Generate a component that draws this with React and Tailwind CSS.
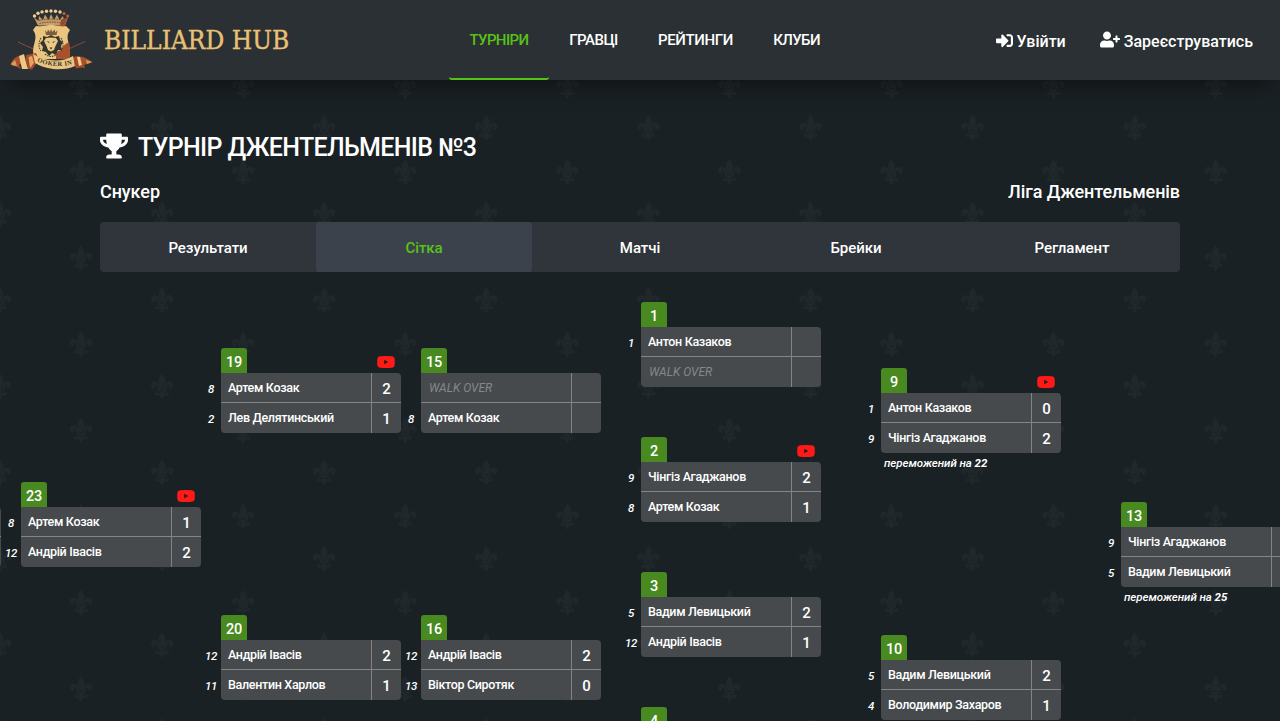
import { FaSignInAlt, FaUserPlus, FaTrophy } from 'react-icons/fa';

const NAV = [
  { label: 'ТУРНІРИ', active: true, cls: 'w-[100px] tracking-[-0.6px]' },
  { label: 'ГРАВЦІ', cls: 'w-[89px] tracking-[-0.5px]' },
  { label: 'РЕЙТИНГИ', cls: 'w-[115px] tracking-[-0.4px]' },
  { label: 'КЛУБИ', cls: 'w-[87px] tracking-[-0.6px]' },
];

const TABS = ['Результати', 'Сітка', 'Матчі', 'Брейки', 'Регламент'];

const MATCHES = [
  { x: -179, y: 210, rows: [['', '', ''], ['', '', '']] },
  { n: 23, x: 21, y: 210, video: true, rows: [['8', 'Артем Козак', '1'], ['12', 'Андрій Івасів', '2']] },
  { n: 19, x: 221, y: 76, video: true, rows: [['8', 'Артем Козак', '2'], ['2', 'Лев Делятинський', '1']] },
  { n: 20, x: 221, y: 343, rows: [['12', 'Андрій Івасів', '2'], ['11', 'Валентин Харлов', '1']] },
  { n: 15, x: 421, y: 76, rows: [['', null, ''], ['8', 'Артем Козак', '']] },
  { n: 16, x: 421, y: 343, rows: [['12', 'Андрій Івасів', '2'], ['13', 'Віктор Сиротяк', '0']] },
  { n: 1, x: 641, y: 30, rows: [['1', 'Антон Казаков', ''], ['', null, '']] },
  { n: 2, x: 641, y: 165, video: true, rows: [['9', 'Чінгіз Агаджанов', '2'], ['8', 'Артем Козак', '1']] },
  { n: 3, x: 641, y: 300, rows: [['5', 'Вадим Левицький', '2'], ['12', 'Андрій Івасів', '1']] },
  { n: 4, x: 641, y: 435, rows: [['', '', ''], ['', '', '']] },
  { n: 9, x: 881, y: 96, video: true, loser: 22, rows: [['1', 'Антон Казаков', '0'], ['9', 'Чінгіз Агаджанов', '2']] },
  { n: 10, x: 881, y: 363, rows: [['5', 'Вадим Левицький', '2'], ['4', 'Володимир Захаров', '1']] },
  { n: 13, x: 1121, y: 230, loser: 25, rows: [['9', 'Чінгіз Агаджанов', ''], ['5', 'Вадим Левицький', '']] },
];

function Lily() {
  return (
    <g>
      <path d="M0-13C1.5-10 3.6-8 3.4-5C3.3-2.500 1.800-.5 1.500 2H-1.500C-1.800-.5-3.300-2.500-3.400-5C-3.600-8-1.500-10 0-13Z" />
      <path d="M2 3C2.500-1 4-5 7.500-5C10-5 11.500-2.500 10.800-.2C10.200 2 7.500 2.600 6.300 1C7.800 1 8.200-.4 7.200-1.200C5.500-2 4.500 0 4.200 3Z" />
      <path d="M-2 3C-2.500-1-4-5-7.500-5C-10-5-11.500-2.500-10.800-.2C-10.200 2-7.500 2.600-6.300 1C-7.800 1-8.200-.4-7.200-1.200C-5.500-2-4.500 0-4.200 3Z" />
      <path d="M-4.500 3H4.500V4.800H-4.500Z" />
      <path d="M-1.600 5H1.600C1.600 7 2.500 7.500 4.500 6C7 5 7.500 8 5.500 9C4 9.500 3 8.500 2.200 8.600C2 10.500 1 11.500 0 13C-1 11.500-2 10.500-2.200 8.600C-3 8.500-4 9.500-5.500 9C-7.500 8-7 5-4.500 6C-2.500 7.500-1.600 7-1.600 5Z" />
    </g>
  );
}

function Backdrop() {
  return (
    <svg className="absolute inset-0 h-full w-full" fill="#21282b">
      <defs>
        <pattern id="lilies" width="162.1" height="86.15" x="0" y="85" patternUnits="userSpaceOnUse">
          <g transform="translate(81 .8)"><Lily /></g>
          <g transform="translate(81 86.9)"><Lily /></g>
          <g transform="translate(0 43)"><Lily /></g>
          <g transform="translate(162.1 43)"><Lily /></g>
        </pattern>
      </defs>
      <rect width="100%" height="100%" fill="url(#lilies)" />
    </svg>
  );
}

function Crest() {
  return (
    <svg className="h-[62px] w-[84px] shrink-0" viewBox="10 9 84 62">
      <path d="M18 42L42 53M85 41.500L60 53" stroke="#8d4a3c" strokeWidth="1" />
      <path d="M34 17.500L38.500 21L39 16L43 20L45 14.500L48.500 20L51 14L54 20L57 14.500L59.500 20L63 16L64 21L68 17.500L65 25.500H38Z" fill="#c79b67" />
      <path d="M61 20L68 17L65 25.500H60Z" fill="#a44a2b" />
      <path d="M39 20.500Q51.500 17.500 64 20.500M39.500 23.500Q51.500 20.500 63.500 23.500" stroke="#4b463b" strokeWidth=".9" strokeDasharray="1.500 1" fill="none" />
      <g fill="#f2cf91">
        <circle cx="34.500" cy="16" r="1.700" /><circle cx="38" cy="13.300" r="1.700" /><circle cx="42" cy="11.900" r="1.700" />
        <circle cx="46.500" cy="11.200" r="1.700" /><circle cx="51" cy="11" r="1.700" /><circle cx="55.500" cy="11.200" r="1.700" />
        <circle cx="60" cy="12" r="1.700" />
      </g>
      <g fill="#b5603a"><circle cx="64" cy="13.500" r="1.600" /><circle cx="67.700" cy="16" r="1.600" /></g>
      <path d="M36 26Q43 27 51 24.500Q59 27 66 26L70 30Q66 35 68.500 43Q70.500 50 69 59H34Q32 50 34.500 43Q37 35 33 30Z" fill="#e9c57f" />
      <path d="M69 42Q71 51 69 59H56Q55 51 61 50Q64 44 69 42Z" fill="#a9502d" />
      <path d="M45 30L47 32.500L48 29.500L50 32L51 29L52.500 32L54.500 29.500L55.500 32.500L57.500 30L56.500 35H46Z" fill="#7a5d3d" />
      <path d="M51 35L55 37L59 36L60 40L63 42L61 46L62 50L58 50L56 55L52 53L49 56L46 52L42 51L43 47L40 43L43 40L43 36L47 37Z" fill="#34352f" />
      <path d="M51 37.500L56 38L58 41L55.500 46L54 50L51 51.500L48 50L46.500 46L44 41L46 38Z" fill="#ecc983" />
      <path d="M46.500 41L49.500 42L49 43ZM55.500 41L52.500 42L53 43ZM49.500 47.500H52.500L51 49.500Z" fill="#2d2e2b" />
      <path d="M41 38Q37 45 41 51M61 38Q65 45 61 51M45 54Q51 59 57 54" fill="none" stroke="#4b463b" strokeWidth="1.200" strokeDasharray="1.500 1" />
      <path d="M10.500 65Q12 58 20 55.500L22 63L19 65L21 69Q14 65 10.500 65ZM92.500 62Q88 59 83 57L77 56L78 67L85 68L84 65L92 62.500Z" fill="#a9502d" />
      <path d="M11 64L15 60L17 66L13 65.500ZM86 60L92 62L87 64Z" fill="#d79d60" />
      <path d="M19 56L24 54L26 62L29 69L22 69Z" fill="#ecc983" />
      <path d="M26 55L36 53L39 60L32 69.500L28 69Q25 62 26 55ZM72 57L79 56L83 67L76 68.500Z" fill="#a44a2b" />
      <path d="M28.500 57L32 56L34 63L30 68Z" fill="#e2a566" />
      <path d="M77 57L80 57L82 65L79 66Z" fill="#efcc89" />
      <path d="M33 54Q43 60.500 56 60.500Q65 60.500 73 56L75 66Q66 70 53 69Q42 67.500 35 63Z" fill="#e9c57f" />
      <path id="ribbon" d="M37 61.500Q54 69 74 64" fill="none" />
      <text fontFamily="Liberation Serif, serif" fontWeight="700" fontSize="6.500" fill="#3c3529" textLength="36">
        <textPath href="#ribbon">OOKER IN</textPath>
      </text>
    </svg>
  );
}

function VideoBadge() {
  return (
    <svg className="absolute left-[156px] top-2 h-3 w-[18px]" viewBox="0 0 18 12">
      <path fillRule="evenodd" fill="#ff1a17" d="M3 0.200Q9-.2 15 .2Q17.300 .4 17.600 2.500Q18 6 17.600 9.500Q17.300 11.600 15 11.800Q9 12.200 3 11.800Q.7 11.600 .4 9.500Q0 6 .4 2.500Q.7 .4 3 .2ZM7.200 3.700V8.300L11.200 6Z" />
    </svg>
  );
}

function Match({ m }) {
  return (
    <div className="absolute w-[180px]" style={{ left: m.x, top: m.y }}>
      <div className="flex h-[25px] w-[26px] items-center justify-center rounded-t-[3px] bg-[#488a20] pt-[4px] text-[14.5px] font-medium leading-5 tracking-[-0.2px]">
        {m.n}
      </div>
      {m.video && <VideoBadge />}
      <div className="h-[60px] rounded-r-[4px] rounded-bl-[4px] bg-[#464a4d]">
        {m.rows.map(([seed, name, score], i) => (
          <div key={i} className={i === 0 ? 'relative flex h-[30px] border-b border-[#838485]' : 'relative flex h-[30px]'}>
            <span className="absolute -left-[20px] top-[8px] w-5 text-center text-[11.5px] font-medium italic leading-4 tracking-[-0.3px]">{seed}</span>
            <div className={name === null
              ? 'w-[150px] pl-2 pt-px text-[12px] italic leading-[29px] text-[#85878a]'
              : 'w-[150px] pl-[7px] text-[12.5px] font-medium leading-[29px] tracking-[-0.32px]'}>
              {name === null ? 'WALK OVER' : name}
            </div>
            <div className="w-[30px] border-l border-[#838485] pt-px text-center text-[15px] font-medium leading-[30px]">{score}</div>
          </div>
        ))}
      </div>
      {m.loser && (
        <div className="pl-[3px] pt-[2px] text-[11.5px] font-medium italic leading-4 tracking-[-0.05px]">
          переможений на <b>{m.loser}</b>
        </div>
      )}
    </div>
  );
}

export default function App() {
  return (
    <div className="relative flex h-[721px] w-full flex-col overflow-hidden bg-[#1a2124] font-['Roboto',sans-serif] text-white">
      <Backdrop />
      <header className="relative flex h-20 shrink-0 bg-[#2a3033] shadow-[0_12px_24px_-8px_rgba(0,0,0,0.5)]">
        <div className="flex w-[449px] items-center pl-[10px]">
          <Crest />
          <span className="ml-[10px] whitespace-nowrap font-['DejaVu_Serif_Condensed','DejaVu_Serif',serif] text-[26px] tracking-[0.03px] text-[#e8c274] [-webkit-text-stroke:0.4px_#e8c274]">BILLIARD HUB</span>
        </div>
        <nav className="flex text-[15px] font-medium">
          {NAV.map((item) => (
            <a key={item.label} className={`flex items-center justify-center ${item.cls} ${item.active ? 'rounded-[3px] border-b-2 border-[#58c218] pt-[2px] text-[#58c218]' : ''}`}>
              {item.label}
            </a>
          ))}
        </nav>
        <div className="ml-auto flex items-center pr-[27px] pt-[3px] text-[16px] font-medium">
          <a className="mr-[34px] flex items-center gap-1">
            <FaSignInAlt className="mb-[3px] size-[17px]" />
            <span>Увійти</span>
          </a>
          <a className="flex items-center gap-[4px]">
            <FaUserPlus className="mb-[4px] h-[17px] w-5" />
            <span>Зареєструватись</span>
          </a>
        </div>
      </header>

      <main className="relative mx-[100px] flex shrink-0 flex-col">
        <h1 className="mt-[49px] flex h-9 items-center text-[25px] font-medium tracking-[-0.65px]">
          <FaTrophy className="mb-[3px] mr-[10px] h-[26px] w-7" />
          <span className="mt-px">ТУРНІР ДЖЕНТЕЛЬМЕНІВ №3</span>
        </h1>
        <div className="mt-[12px] flex h-7 items-center justify-between text-[18px] font-medium tracking-[-0.08px]">
          <span>Снукер</span>
          <span>Ліга Джентельменів</span>
        </div>
        <div className="mt-[17px] flex h-[50px] overflow-hidden rounded bg-[#2f353b] text-[15px] font-medium tracking-[-0.05px]">
          {TABS.map((tab, i) => (
            <div key={tab} className={i === 1
              ? 'flex flex-1 items-center justify-center rounded-[3px] bg-[#3c424c] pt-[2px] text-[#58c218]'
              : 'flex flex-1 items-center justify-center pt-[2px]'}>
              {tab}
            </div>
          ))}
        </div>
      </main>

      <section className="relative flex-1">
        {MATCHES.map((m) => <Match key={`${m.x}:${m.y}`} m={m} />)}
      </section>
    </div>
  );
}
